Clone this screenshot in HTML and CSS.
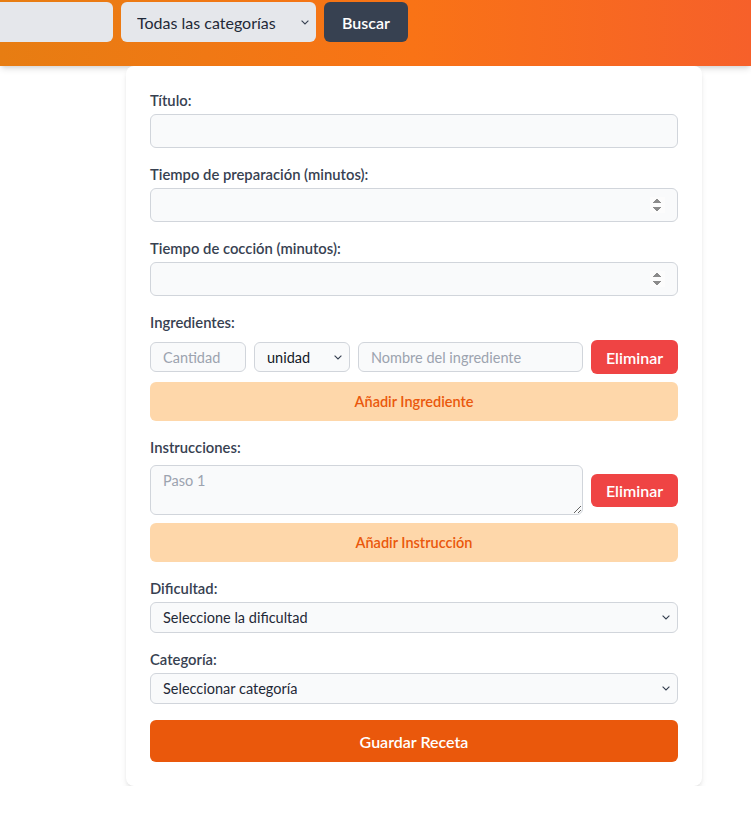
FILE: index.html
```html
<!DOCTYPE html>
<html lang="es">
<head>
<meta charset="utf-8">
<title>Nueva receta</title>
<link rel="stylesheet" href="styles.css">
</head>
<body>
<header class="topbar">
  <div class="search">
    <input class="search-input" type="text">
    <select class="search-select">
      <option>Todas las categorías</option>
    </select>
    <button class="search-btn" type="button">Buscar</button>
  </div>
</header>
<main class="card">
  <form class="form">
    <div class="field">
      <label class="label">Título:</label>
      <input class="input" type="text">
    </div>
    <div class="field">
      <label class="label">Tiempo de preparación (minutos):</label>
      <input class="input" type="number">
    </div>
    <div class="field">
      <label class="label">Tiempo de cocción (minutos):</label>
      <input class="input" type="number">
    </div>
    <div class="field">
      <label class="label label-wide">Ingredientes:</label>
      <div class="row">
        <input class="small-input qty" type="text" placeholder="Cantidad">
        <select class="small-input unit">
          <option>unidad</option>
        </select>
        <input class="small-input name" type="text" placeholder="Nombre del ingrediente">
        <button class="btn-delete" type="button">Eliminar</button>
      </div>
      <button class="btn-add" type="button">Añadir Ingrediente</button>
    </div>
    <div class="field">
      <label class="label label-wide">Instrucciones:</label>
      <div class="row">
        <textarea class="textarea" placeholder="Paso 1"></textarea>
        <button class="btn-delete" type="button">Eliminar</button>
      </div>
      <button class="btn-add" type="button">Añadir Instrucción</button>
    </div>
    <div class="field">
      <label class="label">Dificultad:</label>
      <select class="select">
        <option>Seleccione la dificultad</option>
      </select>
    </div>
    <div class="field">
      <label class="label">Categoría:</label>
      <select class="select">
        <option>Seleccionar categoría</option>
      </select>
    </div>
    <button class="btn-save" type="button">Guardar Receta</button>
  </form>
</main>
</body>
</html>
```

FILE: styles.css
```css
* { box-sizing: border-box; }
html, body { margin: 0; background: #ffffff; }
body {
  font-family: Lato, "Noto Sans", sans-serif;
  color: #1f2937;
}
select {
  -webkit-appearance: none;
  appearance: none;
  background-image: url("data:image/svg+xml,%3Csvg xmlns='http://www.w3.org/2000/svg' width='8' height='5' viewBox='0 0 8 5'%3E%3Cpath d='M0.6 0.6 L4 4 L7.4 0.6' fill='none' stroke='%23374151' stroke-width='1.1'/%3E%3C/svg%3E");
  background-repeat: no-repeat;
  background-size: 8px 5px;
  background-position: right 7px center;
}
input[type=number]::-webkit-inner-spin-button {
  opacity: 1;
}
.topbar {
  height: 66px;
  background: linear-gradient(90deg, #e77d12 0%, #f97316 55%, #f6602a 100%);
  box-shadow: 0 4px 6px -1px rgba(0,0,0,0.12), 0 2px 4px -2px rgba(0,0,0,0.1);
  padding-top: 2px;
  overflow: hidden;
}
.search {
  display: flex;
  gap: 8px;
  height: 40px;
}
.search-input {
  width: 200px;
  margin-left: -87px;
  border: none;
  border-radius: 6px;
  background: #e5e7eb;
}
.search-select {
  width: 195px;
  border: none;
  border-radius: 6px;
  background-color: #e5e7eb;
  color: #1f2937;
  font: 16px Lato, "Noto Sans", sans-serif;
  padding: 0 10px 0 16px;
}
.search-btn {
  width: 84px;
  border: none;
  border-radius: 6px;
  background: #374151;
  color: #ffffff;
  font: 600 16px Lato, "Noto Sans", sans-serif;
}
.card {
  width: 576px;
  margin-left: 126px;
  background: #ffffff;
  border-radius: 8px;
  box-shadow: 0 4px 6px -1px rgba(0,0,0,0.1), 0 2px 4px -2px rgba(0,0,0,0.1);
  padding: 24px;
}
.field { margin-bottom: 16px; }
.label {
  display: block;
  font-size: 14.8px;
  line-height: 20px;
  font-weight: 600;
  color: #374151;
  margin-bottom: 4px;
}
.label-wide { margin-bottom: 8px; }
.input, .select {
  display: block;
  width: 100%;
  height: 34px;
  border: 1px solid #d1d5db;
  border-radius: 6px;
  background-color: #f9fafb;
  padding: 0 12px;
  font: 14.5px Lato, "Noto Sans", sans-serif;
  color: #1f2937;
}
.select { height: 31px; }
.row {
  display: flex;
  align-items: center;
  gap: 8px;
  margin-bottom: 8px;
}
.small-input {
  height: 30px;
  border: 1px solid #d1d5db;
  border-radius: 6px;
  background-color: #f9fafb;
  padding: 0 12px;
  font: 14.5px Lato, "Noto Sans", sans-serif;
  color: #111827;
}
.qty { width: 96px; }
.unit { width: 96px; }
.name { flex: 1; min-width: 0; }
::placeholder { color: #9ca3af; }
.textarea {
  flex: 1;
  height: 50px;
  border: 1px solid #d1d5db;
  border-radius: 6px;
  background: #f9fafb;
  padding: 6px 12px;
  font: 14.5px Lato, "Noto Sans", sans-serif;
  resize: vertical;
}
.btn-delete {
  width: 87px;
  height: 34px;
  border: none;
  border-radius: 6px;
  background: #ef4444;
  color: #ffffff;
  font: 600 16px Lato, "Noto Sans", sans-serif;
}
.row .textarea + .btn-delete { height: 33px; }
.btn-add {
  display: block;
  width: 100%;
  height: 39px;
  border: none;
  border-radius: 6px;
  background: #fed7aa;
  color: #ea580c;
  font: 600 14.5px Lato, "Noto Sans", sans-serif;
}
.btn-save {
  display: block;
  width: 100%;
  height: 42px;
  border: none;
  border-radius: 6px;
  background: #ea580c;
  color: #ffffff;
  font: 600 16px Lato, "Noto Sans", sans-serif;
}
```
